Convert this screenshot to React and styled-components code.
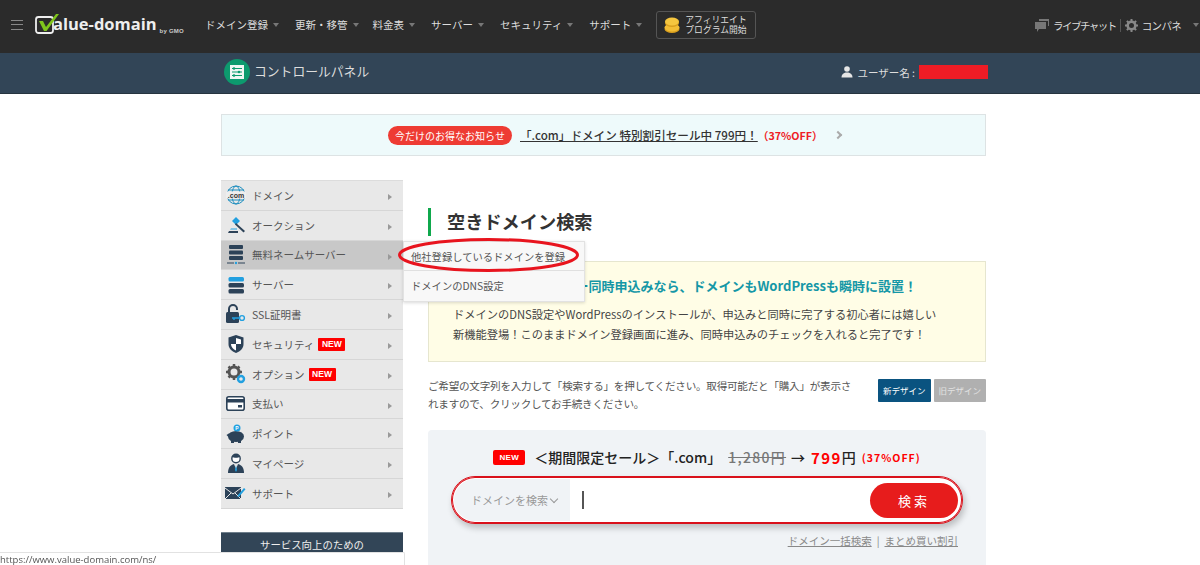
import React from 'react';
import styled, { createGlobalStyle } from 'styled-components';

const Global = createGlobalStyle`
  html, body {
    margin: 0;
    padding: 0;
    height: 565px;
    overflow: hidden;
    background: #fff;
    font-family: "Noto Sans CJK JP", "Liberation Sans", sans-serif;
    color: #444;
  }
  * { box-sizing: border-box; }
`;

const Page = styled.div`
  height: 565px;
  overflow: hidden;
`;

/* top navigation */
const TopBar = styled.header`
  height: 53px;
  background: #2b2b2b;
  display: flex;
  align-items: center;
  color: #ddd;
`;

const Burger = styled.div`
  width: 12px;
  height: 10px;
  margin-left: 11px;
  margin-top: -3px;
  flex: none;
  border-top: 1px solid #888;
  border-bottom: 1px solid #888;
  position: relative;
  &::after {
    content: '';
    position: absolute;
    left: 0;
    right: 0;
    top: 3px;
    height: 1px;
    background: #888;
  }
`;

const Logo = styled.div`
  display: flex;
  align-items: flex-end;
  margin-left: 12px;
  width: 147px;
  height: 24px;
  margin-top: -5px;
  flex: none;
  white-space: nowrap;

  svg {
    flex: none;
  }
`;

const LogoText = styled.span`
  font-family: "Open Sans", "Liberation Sans", sans-serif;
  font-size: 16.5px;
  font-weight: 700;
  line-height: 24px;
  color: #eee;
  margin-left: -8px;
`;

const LogoSmall = styled.span`
  font-family: "Liberation Sans", sans-serif;
  font-size: 6px;
  font-weight: 700;
  line-height: 9px;
  color: #ccc;
  margin-left: 3px;
  letter-spacing: 0.2px;
  white-space: nowrap;
`;

const Nav = styled.nav`
  display: flex;
  align-items: center;
  margin-left: 23px;
  margin-top: -3px;
`;

const NavItem = styled.div`
  display: flex;
  align-items: center;
  font-size: 10.5px;
  line-height: 14px;
  color: #ddd;
  margin-right: ${(p) => p.$gap}px;
  white-space: nowrap;
`;

const Caret = styled.span`
  width: 0;
  height: 0;
  margin-left: 5px;
  border-left: 3.5px solid transparent;
  border-right: 3.5px solid transparent;
  border-top: 4px solid #777;
`;

const Affiliate = styled.div`
  width: 100px;
  height: 28px;
  border: 1px solid #555;
  border-radius: 3px;
  display: flex;
  align-items: center;
  padding-left: 6px;
  gap: 4px;
  font-size: 8.8px;
  line-height: 10px;
  color: #ddd;
  white-space: nowrap;
`;

const TopRight = styled.div`
  margin-left: auto;
  margin-top: -3px;
  display: flex;
  align-items: center;
  font-size: 10.5px;
  color: #ddd;
  white-space: nowrap;
`;

const ChatLabel = styled.span`
  margin-left: 4px;
  letter-spacing: -1.5px;
`;

const PanelLabel = styled.span`
  margin-left: 4px;
  letter-spacing: -0.7px;
`;

const TopCaret = styled(Caret)`
  margin-left: 12px;
  margin-right: 1px;
`;

const Divider = styled.span`
  width: 1px;
  height: 13px;
  background: #555;
  margin: 0 4px 0 4px;
`;

/* control panel bar */
const PanelBar = styled.div`
  height: 41px;
  background: #324557;
  border-bottom: 1px solid #26343f;
  padding-left: 224px;
  padding-right: 212px;
  padding-bottom: 2px;
  display: flex;
  align-items: center;
  color: #ddd;
`;

const PanelIcon = styled.div`
  width: 26px;
  height: 26px;
  border-radius: 50%;
  background: #0d9a6e;
  display: flex;
  align-items: center;
  justify-content: center;
  margin-right: 4px;
`;

const PanelTitle = styled.div`
  font-size: 12.8px;
  margin-top: -3px;
`;

const UserInfo = styled.div`
  margin-left: auto;
  display: flex;
  align-items: center;
  font-size: 10.5px;
  gap: 4px;
`;

const Masked = styled.span`
  width: 69px;
  height: 14px;
  background: #ee1c25;
`;

/* content */
const Wrapper = styled.div`
  padding-left: 221px;
  width: 986px;
`;

const Notice = styled.div`
  margin-top: 20px;
  height: 42px;
  background: #eefafb;
  border: 1px solid #dde3e4;
  display: flex;
  align-items: center;
  padding-left: 166px;
`;

const NoticeTag = styled.span`
  width: 124px;
  height: 19px;
  border-radius: 10px;
  background: #ee3b33;
  color: #fff;
  font-size: 10px;
  line-height: 19px;
  text-align: center;
`;

const NoticeLink = styled.span`
  margin-left: 8px;
  font-size: 11.6px;
  font-weight: 500;
  color: #333;
  text-decoration: underline;
`;

const NoticeOff = styled.span`
  font-size: 10.7px;
  font-weight: 700;
  color: #ee1c25;
`;

const NoticeArrow = styled.span`
  width: 6px;
  height: 6px;
  margin-left: 12px;
  border-top: 2px solid #aaa;
  border-right: 2px solid #aaa;
  transform: rotate(45deg);
`;

const Columns = styled.div`
  display: flex;
  margin-top: 24px;
  gap: 25px;
`;

const Side = styled.aside`
  width: 182px;
  flex: none;
`;

const SideMenu = styled.ul`
  list-style: none;
  margin: 0;
  padding: 0;
  border-top: 1px solid #dcdcdc;
`;

const SideItem = styled.li`
  position: relative;
  height: 29.8px;
  display: flex;
  align-items: center;
  padding-left: 4px;
  background: ${(p) => (p.$active ? '#c8c8c8' : '#e8e8e8')};
  border-bottom: 1px solid #d6d6d6;
  font-size: 10.5px;
  color: #555;
  white-space: nowrap;
`;

const SideIcon = styled.span`
  width: 21px;
  height: 21px;
  margin-right: 6px;
  flex: none;
  display: flex;
  align-items: center;
  justify-content: center;
`;

const NewBadge = styled.span`
  background: #f00;
  color: #fff;
  font-family: "Liberation Sans", sans-serif;
  font-size: 8.5px;
  font-weight: 700;
  line-height: 13px;
  height: 13px;
  width: 27px;
  text-align: center;
  margin-left: 4px;
  border-radius: 1px;
`;

const SideArrow = styled.span`
  position: absolute;
  right: 11px;
  top: 13px;
  width: 0;
  height: 0;
  border-top: 3px solid transparent;
  border-bottom: 3px solid transparent;
  border-left: 4px solid #999;
`;

const Flyout = styled.div`
  position: absolute;
  left: 100%;
  top: 0;
  width: 182px;
  background: #f8f8f8;
  border: 1px solid #e2e2e2;
  box-shadow: 0 1px 3px rgba(0, 0, 0, 0.15);
  z-index: 5;
`;

const FlyoutRow = styled.div`
  height: 29.5px;
  padding-left: 7px;
  font-size: 10.3px;
  line-height: 29px;
  color: #555;
  border-bottom: ${(p) => (p.$last ? '0' : '1px solid #e0e0e0')};
`;

const Ring = styled.svg`
  position: absolute;
  left: -6px;
  top: -4px;
  pointer-events: none;
`;

const SideHead = styled.div`
  margin-top: 23px;
  height: 40px;
  background: #324557;
  border-top: 1px solid #6f7f8c;
  color: #eee;
  font-size: 10.4px;
  line-height: 24px;
  text-align: center;
`;

const Main = styled.main`
  flex: 1;
  min-width: 0;
`;

const Heading = styled.h1`
  margin: 28px 0 0;
  height: 28px;
  border-left: 3px solid #0fa84c;
  padding-left: 16px;
  font-size: 18.2px;
  font-weight: 700;
  line-height: 27px;
  color: #333;
`;

const InfoBox = styled.section`
  margin-top: 25px;
  height: 101px;
  background: #fffde6;
  border: 1px solid #e6e6cf;
  padding: 12px 24px 0;
`;

const InfoTitle = styled.div`
  font-size: 13px;
  font-weight: 700;
  line-height: 24px;
  color: #1597a6;
  text-align: right;
  padding-right: 44px;
  white-space: nowrap;
`;

const InfoText = styled.p`
  margin: 6px 0 0;
  font-size: 11.25px;
  line-height: 20px;
  color: #444;
  white-space: nowrap;
`;

const Lead = styled.div`
  display: flex;
  justify-content: space-between;
  margin-top: 15px;
  height: 37px;
`;

const LeadText = styled.p`
  margin: 0;
  width: 430px;
  font-size: 10.6px;
  letter-spacing: -0.25px;
  line-height: 18px;
  color: #555;
`;

const DesignTabs = styled.div`
  display: flex;
  gap: 3px;
  padding-top: 2px;
`;

const DesignTab = styled.span`
  width: 52.5px;
  height: 23px;
  border-radius: 1px;
  background: ${(p) => (p.$on ? '#0a5380' : '#b0b0b0')};
  color: ${(p) => (p.$on ? '#fff' : '#e2e2e2')};
  font-size: 8.5px;
  line-height: 23px;
  text-align: center;
  white-space: nowrap;
`;

const SearchPanel = styled.section`
  margin-top: 16px;
  height: 170px;
  background: #f0f3f6;
  border-radius: 4px;
  padding: 17px 23px 0;
`;

const Promo = styled.div`
  display: flex;
  align-items: center;
  justify-content: center;
  height: 20px;
  font-size: 14px;
  font-weight: 500;
  color: #222;
  white-space: nowrap;
`;

const PromoBadge = styled.span`
  width: 32px;
  height: 15px;
  margin-right: 9px;
  background: #f00;
  color: #fff;
  border-radius: 2px;
  font-family: "Liberation Sans", sans-serif;
  font-size: 8px;
  font-weight: 700;
  letter-spacing: 0.4px;
  line-height: 15px;
  text-align: center;
`;

const Old = styled.s`
  color: #777;
  margin: 0 5px 0 7px;
  letter-spacing: 1.3px;
`;

const Price = styled.span`
  color: #f00;
  font-size: 15px;
  font-weight: 700;
  letter-spacing: 1.4px;
  margin-left: 6px;
`;

const Off = styled.span`
  color: #f00;
  font-size: 10.5px;
  font-weight: 700;
  letter-spacing: 1px;
  margin-left: 6px;
`;

const SearchBox = styled.div`
  margin-top: 9px;
  height: 48px;
  background: #fff;
  border: 1px solid #d9111b;
  border-radius: 24px;
  box-shadow: 0 0 0 1px #d9111b inset, 2px 4px 6px rgba(0, 0, 0, 0.22);
  padding: 2px 4px 2px 2px;
  display: flex;
  align-items: center;
`;

const Scope = styled.div`
  width: 116px;
  height: 42px;
  background: #f0f3f6;
  border-radius: 21px 0 0 21px;
  display: flex;
  align-items: center;
  justify-content: flex-end;
  padding-right: 13px;
  gap: 3px;
  font-size: 11px;
  color: #999;
`;

const Chevron = styled.span`
  width: 6px;
  height: 6px;
  margin-top: -3px;
  border-right: 1px solid #999;
  border-bottom: 1px solid #999;
  transform: rotate(45deg);
`;

const Field = styled.div`
  flex: 1;
  padding-left: 12px;
  display: flex;
  align-items: center;
`;

const CaretLine = styled.span`
  width: 1.5px;
  height: 18px;
  background: #555;
`;

const SearchButton = styled.button`
  width: 88px;
  height: 35px;
  border: 0;
  border-radius: 18px;
  background: #e71c1c;
  color: #fff;
  font-family: inherit;
  font-size: 13px;
  letter-spacing: 3px;
  padding: 0;
`;

const Links = styled.div`
  display: flex;
  justify-content: flex-end;
  align-items: center;
  margin-top: 8px;
  padding-right: 5px;
  height: 16px;
  font-size: 10.5px;
  color: #888;
  gap: 5px;
`;

const TextLink = styled.span`
  text-decoration: underline;
`;

const Status = styled.div`
  position: fixed;
  left: 0;
  bottom: 0;
  width: 405px;
  height: 13px;
  background: #fff;
  border-top: 1px solid #e2e2e2;
  border-right: 1px solid #e2e2e2;
  border-top-right-radius: 2px;
  font-family: "Open Sans", "Liberation Sans", sans-serif;
  font-size: 9.5px;
  line-height: 13px;
  color: #555;
  z-index: 10;
`;

const NAVY = '#2c4258';
const BLUE = '#22a0e0';

const icons = {
  globe: (
    <svg width="20" height="20" viewBox="0 0 20 20" fill="none" stroke="#1f8fc0" strokeWidth="1">
      <circle cx="10" cy="10" r="9" />
      <ellipse cx="10" cy="10" rx="4" ry="9" />
      <path d="M2 5h16M2 15h16" />
      <rect x="0" y="6.500" width="20" height="7" fill="#eee" stroke="none" />
      <text x="10" y="13" textAnchor="middle" fontSize="7" fontWeight="700" fill="#333" stroke="none" fontFamily="Liberation Sans">.com</text>
    </svg>
  ),
  gavel: (
    <svg width="20" height="20" viewBox="0 0 20 20">
      <path d="M2 18h10v-2H3z" fill={NAVY} />
      <path d="M4 14.500h7v-1H5z" fill={BLUE} />
      <path d="M6 6l4-4 4 4-4 4z" fill={BLUE} />
      <path d="M10 8l9 8-1.500 1.500-8.500-8z" fill={NAVY} />
    </svg>
  ),
  dns: (
    <svg width="20" height="21" viewBox="0 0 20 21">
      <rect x="3" y="1" width="14" height="4" rx="1" fill={NAVY} />
      <rect x="3" y="6.500" width="14" height="4" rx="1" fill={NAVY} />
      <rect x="3" y="12" width="14" height="4" rx="1" fill={NAVY} />
      <path d="M1 19h7M12 19h7" stroke={NAVY} strokeWidth="1" />
      <circle cx="10" cy="19" r="1.200" fill={BLUE} />
    </svg>
  ),
  server: (
    <svg width="20" height="18" viewBox="0 0 20 18">
      <rect x="2.500" y="1" width="15.500" height="4.500" rx="1.500" fill={BLUE} />
      <rect x="2.500" y="7" width="15.500" height="4.500" rx="1.500" fill={NAVY} />
      <rect x="2.500" y="13" width="15.500" height="4.500" rx="1.500" fill={NAVY} />
    </svg>
  ),
  lock: (
    <svg width="21" height="21" viewBox="0 0 21 21">
      <path d="M4 8V5a4 4 0 0 1 8 0v1" fill="none" stroke={NAVY} strokeWidth="2" />
      <rect x="1" y="8" width="13" height="11" rx="1.500" fill={NAVY} />
      <circle cx="17" cy="14" r="2.400" fill="none" stroke={BLUE} strokeWidth="1.400" />
      <path d="M7 14h8M9 14v2" stroke={BLUE} strokeWidth="1.400" />
    </svg>
  ),
  shield: (
    <svg width="18" height="20" viewBox="0 0 18 20">
      <path d="M9 1l7.500 2.500V10c0 4-3 7.500-7.500 9C4.500 17.500 1.500 14 1.500 10V3.500z" fill={NAVY} />
      <path d="M9 4l5 1.600V10H9zM9 10v6.500C6.500 15.500 4 13 4 10z" fill="#fff" />
    </svg>
  ),
  gears: (
    <svg width="20" height="20" viewBox="0 0 20 20">
      <circle cx="8" cy="8" r="5" fill="none" stroke="#555" strokeWidth="3" />
      <path d="M8 0v3M8 13v3M0 8h3M13 8h3M2.500 2.500l2 2M11.500 11.500l2 2M13.500 2.500l-2 2M4.500 11.500l-2 2" stroke="#555" strokeWidth="2.500" />
      <circle cx="15" cy="15" r="3" fill="none" stroke={BLUE} strokeWidth="2.400" />
    </svg>
  ),
  card: (
    <svg width="19" height="15" viewBox="0 0 19 15">
      <rect x="0.800" y="0.800" width="17.400" height="13.400" rx="2" fill="#fff" stroke={NAVY} strokeWidth="1.600" />
      <rect x="1" y="3" width="17" height="3.500" fill={NAVY} />
      <rect x="12" y="9" width="4" height="2.500" fill={NAVY} />
    </svg>
  ),
  piggy: (
    <svg width="20" height="20" viewBox="0 0 20 20">
      <ellipse cx="10" cy="12.500" rx="8" ry="5.500" fill={NAVY} />
      <path d="M0.500 11l3-2v5zM5 16h3v3H5zM12 16h3v3h-3z" fill={NAVY} />
      <circle cx="11" cy="4" r="3.500" fill={BLUE} />
      <text x="11" y="6" textAnchor="middle" fontSize="5" fontWeight="700" fill="#fff" fontFamily="Liberation Sans">P</text>
    </svg>
  ),
  person: (
    <svg width="18" height="21" viewBox="0 0 18 21">
      <circle cx="9" cy="5.500" r="4.200" fill="#fff" stroke={NAVY} strokeWidth="1.400" />
      <path d="M5 4c2 1 6 1 8 0-1-3-7-3-8 0z" fill={NAVY} />
      <path d="M1 20c0-5 2-8 6-9l2 5 2-5c4 1 6 4 6 9z" fill={NAVY} />
      <path d="M9 12l1 5-1 2-1-2z" fill={BLUE} />
    </svg>
  ),
  mail: (
    <svg width="21" height="14" viewBox="0 0 21 14">
      <rect x="0" y="1" width="16" height="12" fill={NAVY} />
      <path d="M0 2l8 6 8-6M0 13l6-6M16 13l-6-6" fill="none" stroke="#e8e8e8" strokeWidth="1" />
      <path d="M13 9l6-7 1.500 1.200-6 7-2 .8z" fill={BLUE} />
    </svg>
  ),
};

const menu = [
  { key: 'globe', label: 'ドメイン' },
  { key: 'gavel', label: 'オークション' },
  { key: 'dns', label: '無料ネームサーバー', active: true },
  { key: 'server', label: 'サーバー' },
  { key: 'lock', label: 'SSL証明書' },
  { key: 'shield', label: 'セキュリティ', isNew: true },
  { key: 'gears', label: 'オプション', isNew: true },
  { key: 'card', label: '支払い' },
  { key: 'piggy', label: 'ポイント' },
  { key: 'person', label: 'マイページ' },
  { key: 'mail', label: 'サポート' },
];

const navItems = [
  { label: 'ドメイン登録', gap: 16 },
  { label: '更新・移管', gap: 14 },
  { label: '料金表', gap: 16 },
  { label: 'サーバー', gap: 16 },
  { label: 'セキュリティ', gap: 16 },
  { label: 'サポート', gap: 14 },
];

export default function App() {
  return (
    <Page>
      <Global />
      <TopBar>
        <Burger />
        <Logo>
          <svg width="26" height="24" viewBox="0 0 26 24">
            <rect x="1" y="5" width="17" height="16" rx="2.500" fill="none" stroke="#eee" strokeWidth="1.800" />
            <path d="M4 9l5 10h2.500L24 2h-3l-10 13-3-6z" fill="#7fc41c" />
          </svg>
          <LogoText>alue-domain</LogoText>
          <LogoSmall>by GMO</LogoSmall>
        </Logo>
        <Nav>
          {navItems.map((item) => (
            <NavItem key={item.label} $gap={item.gap}>
              {item.label}
              <Caret />
            </NavItem>
          ))}
          <Affiliate>
            <svg width="18" height="18" viewBox="0 0 18 18">
              <ellipse cx="9" cy="13" rx="7.500" ry="4" fill="#d99f1e" />
              <ellipse cx="9" cy="11.500" rx="7.500" ry="4" fill="#f2bd35" />
              <ellipse cx="9" cy="7" rx="7" ry="4" fill="#d99f1e" />
              <ellipse cx="9" cy="5.500" rx="7" ry="4" fill="#f5c63f" />
            </svg>
            <span>アフィリエイト<br />プログラム開始</span>
          </Affiliate>
        </Nav>
        <TopRight>
          <svg width="14" height="13" viewBox="0 0 14 13" fill="#777">
            <path d="M4 0h10v7h-1V2H4z" />
            <path d="M0 3h11v7H4l-2 3v-3H0z" />
          </svg>
          <ChatLabel>ライブチャット</ChatLabel>
          <Divider />
          <svg width="13" height="13" viewBox="0 0 13 13">
            <circle cx="6.500" cy="6.500" r="3.800" fill="none" stroke="#888" strokeWidth="2.600" />
            <path d="M6.500 0v2.500M6.500 10.500V13M0 6.500h2.500M10.500 6.500H13M1.900 1.900l1.800 1.800M9.300 9.300l1.800 1.800M11.100 1.900L9.300 3.700M3.700 9.300l-1.800 1.800" stroke="#888" strokeWidth="2" />
          </svg>
          <PanelLabel>コンパネ</PanelLabel>
          <TopCaret />
        </TopRight>
      </TopBar>

      <PanelBar>
        <PanelIcon>
          <svg width="14" height="14" viewBox="0 0 14 14">
            <rect width="14" height="14" fill="#f2f6f4" />
            <path d="M2 3.500h10M2 7h10M2 10.500h10" stroke="#0d9a6e" strokeWidth="1" />
            <circle cx="4" cy="3.500" r="1.300" fill="#0d9a6e" />
            <circle cx="9" cy="7" r="1.300" fill="#0d9a6e" />
            <circle cx="4" cy="10.500" r="1.300" fill="#0d9a6e" />
          </svg>
        </PanelIcon>
        <PanelTitle>コントロールパネル</PanelTitle>
        <UserInfo>
          <svg width="12" height="12" viewBox="0 0 12 12" fill="#e6e6e6">
            <circle cx="6" cy="3" r="2.800" />
            <path d="M0.500 11.500c0-3.500 2.500-5 5.500-5s5.500 1.500 5.500 5z" />
          </svg>
          ユーザー名 :
          <Masked />
        </UserInfo>
      </PanelBar>

      <Wrapper>
        <Notice>
          <NoticeTag>今だけのお得なお知らせ</NoticeTag>
          <NoticeLink>「.com」ドメイン 特別割引セール中 799円！</NoticeLink>
          <NoticeOff>（37%OFF）</NoticeOff>
          <NoticeArrow />
        </Notice>

        <Columns>
          <Side>
            <SideMenu>
              {menu.map((item) => (
                <SideItem key={item.key} $active={item.active}>
                  <SideIcon>{icons[item.key]}</SideIcon>
                  {item.label}
                  {item.isNew && <NewBadge>NEW</NewBadge>}
                  <SideArrow />
                  {item.active && (
                    <Flyout>
                      <FlyoutRow>他社登録しているドメインを登録</FlyoutRow>
                      <FlyoutRow $last>ドメインのDNS設定</FlyoutRow>
                      <Ring width="186" height="38" viewBox="0 0 186 38">
                        <ellipse cx="90.500" cy="17" rx="89" ry="15.500" fill="none" stroke="#e8141e" strokeWidth="3" />
                      </Ring>
                    </Flyout>
                  )}
                </SideItem>
              ))}
            </SideMenu>
            <SideHead>サービス向上のための</SideHead>
          </Side>

          <Main>
            <Heading>空きドメイン検索</Heading>
            <InfoBox>
              <InfoTitle>サーバー同時申込みなら、ドメインもWordPressも瞬時に設置！</InfoTitle>
              <InfoText>
                ドメインのDNS設定やWordPressのインストールが、申込みと同時に完了する初心者には嬉しい
                <br />
                新機能登場！このままドメイン登録画面に進み、同時申込みのチェックを入れると完了です！
              </InfoText>
            </InfoBox>
            <Lead>
              <LeadText>
                ご希望の文字列を入力して「検索する」を押してください。取得可能だと「購入」が表示されますので、クリックしてお手続きください。
              </LeadText>
              <DesignTabs>
                <DesignTab $on>新デザイン</DesignTab>
                <DesignTab>旧デザイン</DesignTab>
              </DesignTabs>
            </Lead>
            <SearchPanel>
              <Promo>
                <PromoBadge>NEW</PromoBadge>
                ＜期間限定セール＞「.com」
                <Old>1,280円</Old>
                →
                <Price>799</Price>円
                <Off>(37%OFF)</Off>
              </Promo>
              <SearchBox>
                <Scope>
                  ドメインを検索
                  <Chevron />
                </Scope>
                <Field>
                  <CaretLine />
                </Field>
                <SearchButton>検索</SearchButton>
              </SearchBox>
              <Links>
                <TextLink>ドメイン一括検索</TextLink>
                <span>|</span>
                <TextLink>まとめ買い割引</TextLink>
              </Links>
            </SearchPanel>
          </Main>
        </Columns>
      </Wrapper>

      <Status>https://www.value-domain.com/ns/</Status>
    </Page>
  );
}
